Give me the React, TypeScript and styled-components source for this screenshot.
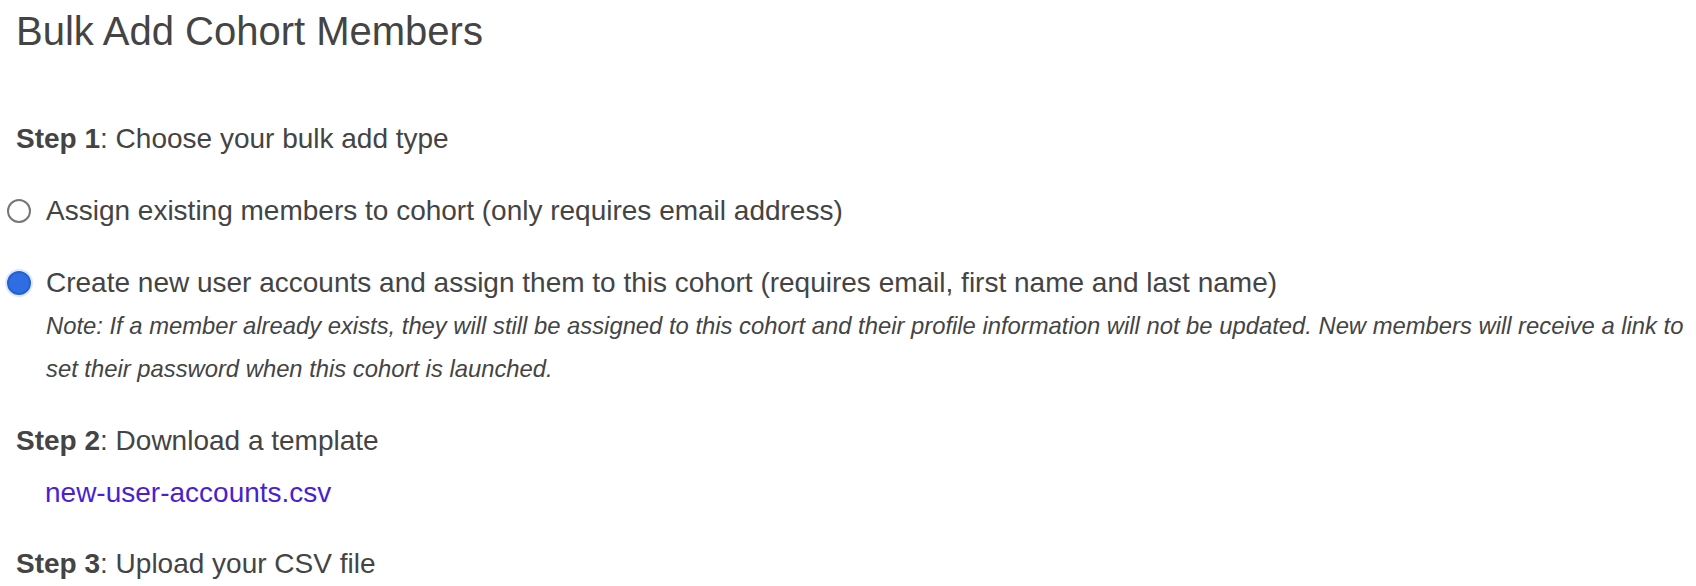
import React from "react";
import styled, { createGlobalStyle } from "styled-components";

const GlobalStyle = createGlobalStyle`
  html, body {
    margin: 0;
    padding: 0;
    background: #ffffff;
  }
  body {
    font-family: "Liberation Sans", Arial, Helvetica, sans-serif;
    color: #444444;
  }
`;

const Page = styled.main`
  display: flex;
  flex-direction: column;
  padding: 7px 0 0 16px;
  font-family: "Liberation Sans", Arial, Helvetica, sans-serif;
  color: #444444;
`;

const Title = styled.h1`
  margin: 0;
  font-size: 40px;
  line-height: 48px;
  font-weight: 400;
  color: #444444;
`;

const StepHeading = styled.p<{ $gap: number }>`
  margin: ${(p) => p.$gap}px 0 0 0;
  font-size: 28px;
  line-height: 40px;
  color: #444444;

  strong {
    font-weight: 700;
  }
`;

const OptionList = styled.div`
  display: flex;
  flex-direction: column;
  gap: 32px;
  margin: 32px 0 0 -9px;
`;

const Option = styled.label`
  display: grid;
  grid-template-columns: 24px 1fr;
  column-gap: 15px;
  align-items: start;
  cursor: pointer;
`;

const RadioInput = styled.input.attrs({ type: "radio" })`
  appearance: none;
  -webkit-appearance: none;
  box-sizing: border-box;
  width: 24px;
  height: 24px;
  margin: 8px 0 0 0;
  border-radius: 50%;
  border: 2px solid #767676;
  background: #ffffff;

  &:checked {
    border: 2px solid #2460d6;
    background: #2f6de3;
    box-shadow: 0 0 0 2px #dfe9fb;
  }
`;

const OptionBody = styled.div`
  display: flex;
  flex-direction: column;
`;

const OptionLabel = styled.span`
  font-size: 28px;
  line-height: 40px;
  color: #444444;
`;

const Note = styled.p`
  margin: 1px 0 0 0;
  font-size: 23.8px;
  line-height: 43px;
  font-style: italic;
  color: #444444;
`;

const TemplateLink = styled.a`
  align-self: flex-start;
  margin: 12px 0 0 29px;
  font-size: 28px;
  line-height: 40px;
  color: #4a1fd2;
  text-decoration: none;
`;

export default function App() {
  return (
    <>
      <GlobalStyle />
      <Page>
        <Title>Bulk Add Cohort Members</Title>

        <StepHeading $gap={64}>
          <strong>Step 1</strong>: Choose your bulk add type
        </StepHeading>

        <OptionList>
          <Option>
            <RadioInput name="bulk-type" value="existing" />
            <OptionBody>
              <OptionLabel>
                Assign existing members to cohort (only requires email address)
              </OptionLabel>
            </OptionBody>
          </Option>
          <Option>
            <RadioInput name="bulk-type" value="new" defaultChecked />
            <OptionBody>
              <OptionLabel>
                Create new user accounts and assign them to this cohort (requires
                email, first name and last name)
              </OptionLabel>
              <Note>
                Note: If a member already exists, they will still be assigned to
                this cohort and their profile information will not be updated. New
                members will receive a link to set their password when this cohort
                is launched.
              </Note>
            </OptionBody>
          </Option>
        </OptionList>

        <StepHeading $gap={31}>
          <strong>Step 2</strong>: Download a template
        </StepHeading>
        <TemplateLink href="#">new-user-accounts.csv</TemplateLink>

        <StepHeading $gap={31}>
          <strong>Step 3</strong>: Upload your CSV file
        </StepHeading>
      </Page>
    </>
  );
}
